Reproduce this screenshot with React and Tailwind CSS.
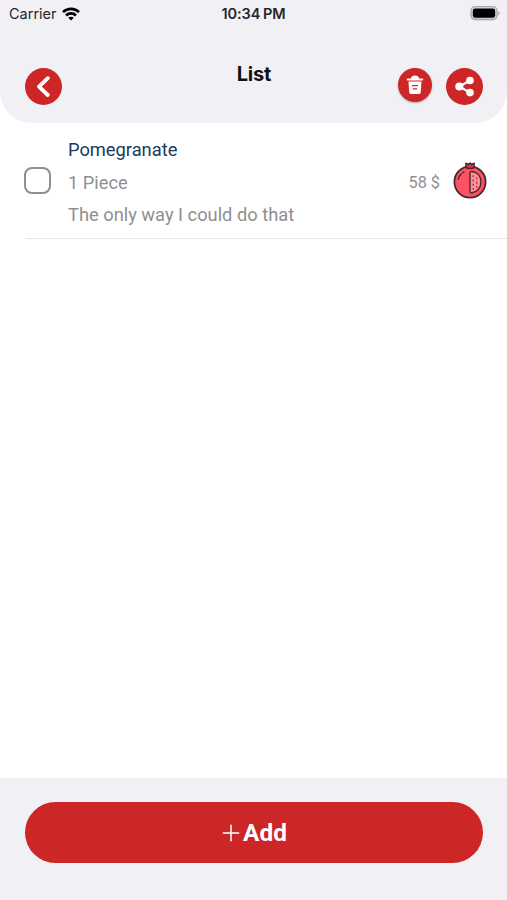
import { useState } from "react";

const items = [
  {
    id: 1,
    name: "Pomegranate",
    amount: "1 Piece",
    note: "The only way I could do that",
    price: "58 $",
  },
];

const WifiIcon = () => (
  <svg viewBox="0 0 18 14" className="h-[14px] w-[18px]" fill="none" stroke="#000" strokeWidth="2.7">
    <path d="M1 5.1C5.4.8 12.6.8 17 5.1" />
    <path d="M4 8.5c2.8-2.8 7.2-2.8 10 0" />
    <path d="M9 13.6 6.2 10.8c1.6-1.5 4-1.5 5.6 0Z" fill="#000" stroke="none" />
  </svg>
);

const BatteryIcon = () => (
  <svg viewBox="0 0 31 15" className="h-[15px] w-[31px]">
    <rect x="1" y=".7" width="26" height="12.8" rx="4" fill="#dcdce0" stroke="#a5a5a9" strokeWidth="1.3" />
    <rect x="2.8" y="2.5" width="22.4" height="9.2" rx="2.3" fill="#000" />
    <path d="M28.3 5c2 .8 2 3.6 0 4.4Z" fill="#a5a5a9" />
  </svg>
);

const BackIcon = () => (
  <svg viewBox="0 0 37 37" className="h-[37px] w-[37px]" fill="none" stroke="#fff" strokeWidth="3.9" strokeLinecap="round" strokeLinejoin="round">
    <path d="M22.8 10.2 14 18.6l8.8 8.4" />
  </svg>
);

const TrashIcon = () => (
  <svg viewBox="0 0 35 35" className="h-[34px] w-[34px]">
    <path d="M13.3 10.8c.3-2 1.7-3 4.2-3s3.9 1 4.2 3h3.4c1.2 0 1.2 2 0 2H9.9c-1.2 0-1.2-2 0-2Z" fill="#fff" />
    <path d="M10.8 14h13.4l-.8 10.9c-.1 1.2-.9 1.8-2.1 1.8h-7.6c-1.2 0-2-.6-2.1-1.8Z" fill="#fff" />
    <path d="M15 18.2h5M15.8 21.6h3.4" fill="none" stroke="#cc2626" strokeWidth="1.3" strokeLinecap="round" />
  </svg>
);

const ShareIcon = () => (
  <svg viewBox="0 0 37 37" className="h-[37px] w-[37px]" fill="#fff">
    <path d="M24 12.5 13.3 18.5 24 24.6" fill="none" stroke="#fff" strokeWidth="2.2" />
    <circle cx="24" cy="12.5" r="3.8" />
    <circle cx="13.3" cy="18.5" r="4" />
    <circle cx="24" cy="24.6" r="3.8" />
  </svg>
);

const PomegranateIcon = () => (
  <svg viewBox="0 0 34 38" className="h-[38px] w-[34px]" strokeLinecap="round" strokeLinejoin="round">
    <circle cx="17" cy="21" r="15.6" fill="#fb5363" stroke="#4a2630" strokeWidth="1.8" />
    <path d="M12.9 6.8V2.3l2.5 1.1L17 2.1l1.6 1.3 2.5-1.1v4.5c-2.2.8-6 .8-8.2 0Z" fill="#cf3b4c" stroke="#4a2630" strokeWidth="1.5" />
    <path d="M17 12c0-1.2.8-1.7 2-1.5 5.4.8 9 4.9 9 10.5s-3.6 10-9 10.8c-1.2.2-2-.3-2-1.5Z" fill="#ff9299" stroke="#4a2630" strokeWidth="1.4" />
    <path d="M20.2 14.8v.8M20.2 19v.8M20.2 23.2v.8M20.2 27.4v.8M23.7 17v.8M23.7 21.2v.8M23.7 25.4v.8" stroke="#b63449" strokeWidth="1.5" />
    <path d="M5.2 18.2c.5-2 1.5-3.8 3-5.2M9.8 11.6l1.2-.7" fill="none" stroke="#4a2630" strokeWidth="1.4" />
  </svg>
);

const StatusBar = () => (
  <div className="grid h-7 grid-cols-3 items-center pl-[9px] pr-[6px] font-[Inter,sans-serif] text-[14.5px] text-[#252529]">
    <div className="-mt-px flex items-center gap-[5px]">
      <span>Carrier</span>
      <WifiIcon />
    </div>
    <span className="-ml-[3px] text-center font-semibold tracking-[-0.05px] [word-spacing:-1px]">
      10:34 PM
    </span>
    <div className="-mt-px flex justify-end">
      <BatteryIcon />
    </div>
  </div>
);

const ListRow = ({ item }) => {
  const [checked, setChecked] = useState(false);

  return (
    <li className="ml-[26px] flex h-[116px] border-b border-[#e6e6e8] pr-5">
      <button
        type="button"
        aria-label="Select item"
        aria-pressed={checked}
        onClick={() => setChecked((c) => !c)}
        className={`-ml-[2px] mt-[44px] h-[27px] w-[27px] rounded-[8px] border-2 border-[#8f8f91] ${
          checked ? "bg-[#cc2626]" : "bg-white"
        }`}
      />
      <div className="ml-[17px] flex-1 pt-[11px] text-[18.3px] text-[#8f8f91]">
        <p className="h-[33px] leading-8 text-[#193b60]">{item.name}</p>
        <p className="h-8 leading-8">{item.amount}</p>
        <p className="h-8 leading-8">{item.note}</p>
      </div>
      <span className="mt-[48px] mr-[13px] h-6 text-[16.3px] leading-6 text-[#8f8f91]">{item.price}</span>
      <div className="mt-[38px]">
        <PomegranateIcon />
      </div>
    </li>
  );
};

export default function App() {
  return (
    <main className="flex h-screen w-full flex-col overflow-hidden bg-white font-[Roboto,sans-serif]">
      <header className="h-[123px] shrink-0 rounded-b-[32px] bg-[#f1f0f5]">
        <StatusBar />
        <div className="grid grid-cols-3 items-start pl-[25px] pr-6 pt-10">
          <button type="button" aria-label="Back" className="h-[37px] w-[37px] rounded-full bg-[#cc2626]">
            <BackIcon />
          </button>
          <h1 className="-mt-[6px] text-center font-[Inter,sans-serif] text-[20px] font-bold leading-6 tracking-[-0.2px] text-[#111114]">
            List
          </h1>
          <div className="flex justify-end gap-[14px]">
            <button type="button" aria-label="Delete" className="h-[34px] w-[34px] rounded-full bg-[#cc2626] shadow-[0_1px_2px_rgba(0,0,0,0.3)]">
              <TrashIcon />
            </button>
            <button type="button" aria-label="Share" className="h-[37px] w-[37px] rounded-full bg-[#cc2626]">
              <ShareIcon />
            </button>
          </div>
        </div>
      </header>

      <ul className="flex-1">
        {items.map((item) => (
          <ListRow key={item.id} item={item} />
        ))}
      </ul>

      <footer className="h-[122px] shrink-0 bg-[#f1f0f5] pl-[25px] pr-6 pt-6">
        <button
          type="button"
          className="flex h-[61px] w-full items-center justify-center gap-[3px] rounded-full bg-[#cc2626] pl-px text-[24.4px] font-bold text-white"
        >
          <svg viewBox="0 0 18 18" className="h-[18px] w-[18px]" stroke="#fff" strokeWidth="1.6">
            <path d="M9 .8v16.4M.8 9h16.4" />
          </svg>
          <span className="pt-0.5">Add</span>
        </button>
      </footer>
    </main>
  );
}
